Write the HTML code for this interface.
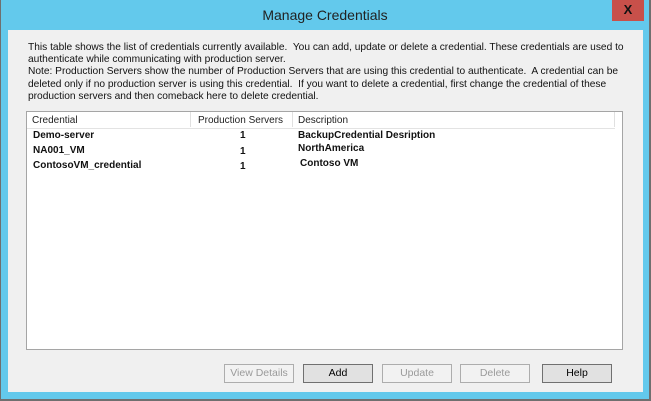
<!DOCTYPE html>
<html><head><style>
body{margin:0;width:651px;height:401px;background:#6f6f6f;font-family:"Liberation Sans",sans-serif;overflow:hidden;position:relative}
.frame{position:absolute;left:1px;top:0;width:648px;height:399px;background:#63c9ec}
.title{position:absolute;left:0;top:7px;width:648px;text-align:center;font-size:14px;color:#222}
.close{position:absolute;left:611px;top:0;width:32px;height:21px;background:#c8504a;color:#111;font-weight:bold;font-size:13px;text-align:center;line-height:20px}
.client{position:absolute;left:8px;top:30px;width:635px;height:362px;background:#f0f0f0}
.txt{position:absolute;left:28px;top:42px;width:600px;font-size:10.2px;line-height:12.2px;color:#111}
.list{position:absolute;left:26px;top:111px;width:597px;height:239px;background:#fff;border:1px solid #a5a5a5;box-sizing:border-box}
.hdr{position:absolute;left:0;top:0;width:588px;height:16px;border-bottom:1px solid #e3e3e3;font-size:10px;color:#222}
.hdr span{position:absolute;top:3px}
.sep{position:absolute;top:0;width:1px;height:15px;background:#e0e0e0}
.row{position:absolute;font-size:10px;font-weight:bold;color:#111}
.btn{position:absolute;top:364px;height:19px;box-sizing:border-box;border:1px solid #adadad;background:#f2f2f2;font-size:10.5px;text-align:center;line-height:17px;color:#9a9a9a}
.btn.en{background:#e1e1e1;border-color:#707070;color:#000}
</style></head><body>
<div class="frame">
<div class="title">Manage Credentials</div>
<div class="close">X</div>
</div>
<div class="client"></div>
<div class="txt">This table shows the list of credentials currently available.&nbsp; You can add, update or delete a credential. These credentials are used to authenticate while communicating with production server.<br>Note: Production Servers show the number of Production Servers that are using this credential to authenticate.&nbsp; A credential can be deleted only if no production server is using this credential.&nbsp; If you want to delete a credential, first change the credential of these production servers and then comeback here to delete credential.</div>
<div class="list">
<div class="hdr"><span style="left:5px">Credential</span><div class="sep" style="left:163px"></div><span style="left:171px">Production Servers</span><div class="sep" style="left:265px"></div><span style="left:271px">Description</span><div class="sep" style="left:587px"></div></div>
<div class="row" style="left:6px;top:18px">Demo-server</div><div class="row" style="left:213px;top:18px">1</div><div class="row" style="left:271px;top:18px">BackupCredential Desription</div>
<div class="row" style="left:6px;top:33px">NA001_VM</div><div class="row" style="left:213px;top:34px">1</div><div class="row" style="left:271px;top:31px">NorthAmerica</div>
<div class="row" style="left:6px;top:48px">ContosoVM_credential</div><div class="row" style="left:213px;top:49px">1</div><div class="row" style="left:273px;top:46px">Contoso VM</div>
</div>
<div class="btn" style="left:224px;width:70px">View Details</div>
<div class="btn en" style="left:303px;width:70px">Add</div>
<div class="btn" style="left:382px;width:70px">Update</div>
<div class="btn" style="left:460px;width:70px">Delete</div>
<div class="btn en" style="left:542px;width:70px">Help</div>
</body></html>
